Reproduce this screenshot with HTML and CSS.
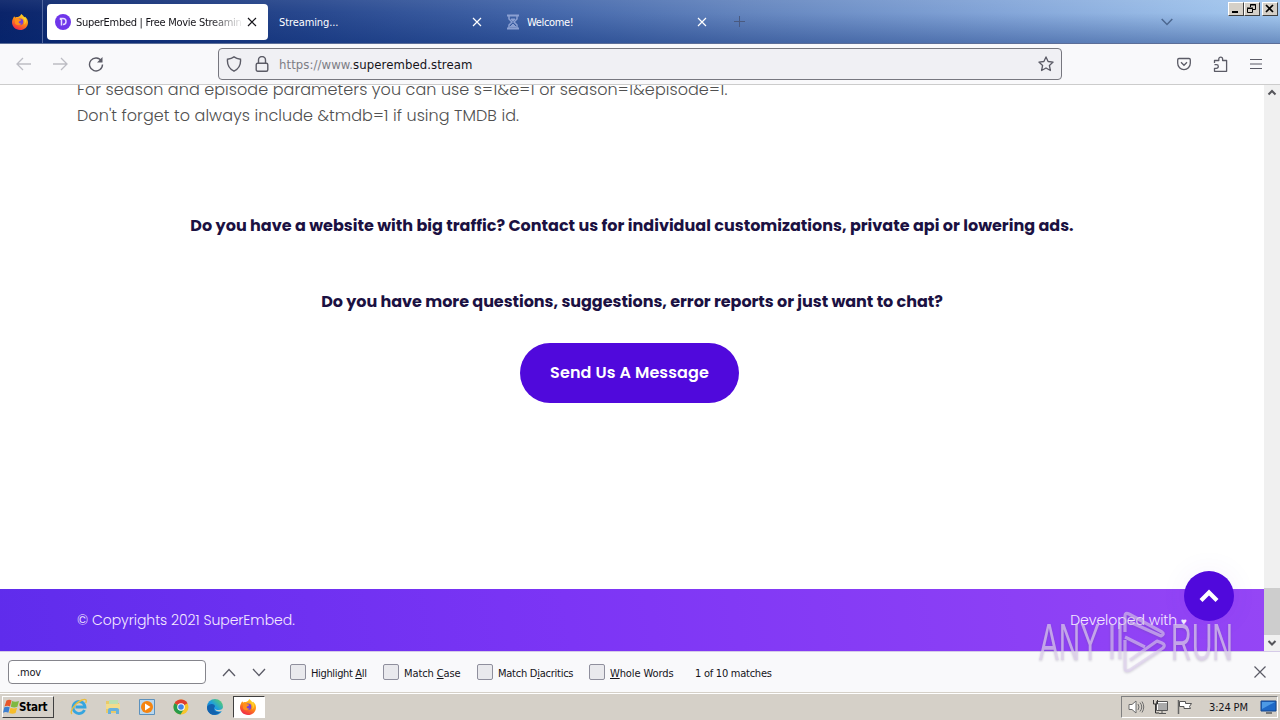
FILE: index.html
```html
<!DOCTYPE html>
<html lang="en">
<head>
    <meta charset="UTF-8">
    <meta name="viewport" content="width=device-width, initial-scale=1.0">
    <title>SuperEmbed | Free Movie Streaming</title>
    <link rel="stylesheet" href="styles.css">
</head>
<body>
    <!-- Shared icons -->
    <svg class="defs" width="0" height="0">
        <defs>
            <linearGradient id="fire" x1="0.8" y1="0" x2="0.3" y2="1">
                <stop offset="0" stop-color="#ffe226"/>
                <stop offset="0.5" stop-color="#ff8a16"/>
                <stop offset="1" stop-color="#f0234b"/>
            </linearGradient>
            <linearGradient id="sea" x1="0" y1="1" x2="1" y2="0">
                <stop offset="0" stop-color="#0c59a4"/>
                <stop offset="0.5" stop-color="#1b9de2"/>
                <stop offset="1" stop-color="#66d955"/>
            </linearGradient>
            <symbol id="firefox" viewBox="0 0 16 16">
                <path d="M2.2 2.2c.3.7.7 1 1.2 1.3C4.400 2.900 5.200 2.900 6 3.100 7.300 2.500 8.800 1.500 9.200 0c1.300.8 2.400 1.900 3 3.400.5-.2.700-.6.700-1C15 4.200 16 6.200 16 8.400 16 12.700 12.500 16 8 16S0 12.700 0 8.300C0 6 1 4.500 2.200 2.200z" fill="url(#fire)"/>
                <circle cx="8" cy="7.800" r="3.300" fill="#7542d8"/>
                <path d="M3 5c1.500-1 3-.9 4.400.3 1 .1 1.800.2 1.800.7-.4 1-1.500 1.100-2.300 1.500-.7 1.500.8 2.400 2.600 1.700-1 2.500-5 2.800-6.500 0z" fill="#ff8f1c"/>
                <path d="M10 3c2.500 1.500 3.500 4.500 2 7.500 2.400-1.400 2.600-4.600 1-7z" fill="#ffd52e"/>
            </symbol>
            <symbol id="cross" viewBox="0 0 10 10">
                <path d="M1 1l8 8M9 1L1 9" fill="none" stroke="currentColor" stroke-width="1.200"/>
            </symbol>
        </defs>
    </svg>

    <!-- Tab strip -->
    <header class="tabstrip">
        <div class="home-tab"><svg width="16" height="16"><use href="#firefox"/></svg></div>
        <div class="tab active">
            <svg width="16" height="16" viewBox="0 0 16 16">
                <circle cx="8" cy="8" r="8" fill="#6e35ea"/>
                <path d="M5.500 6v-1.500h2.500a3 3 0 0 1 0 6M6.500 5v6.500" fill="none" stroke="#e6dcff" stroke-width="1.500"/>
            </svg>
            <span class="title fade">SuperEmbed | Free Movie Streamin</span>
            <svg class="close" width="10" height="10"><use href="#cross"/></svg>
        </div>
        <div class="tab second">
            <span class="title">Streaming...</span>
            <svg class="close" width="10" height="10"><use href="#cross"/></svg>
        </div>
        <div class="tab third">
            <svg width="14" height="16" viewBox="0 0 14 16" fill="none" stroke="#8ba0d2">
                <path d="M1 1.500h12M1 14.500h12" stroke-width="2"/>
                <path d="M3 2v3l3 3-3 3v3M11 2v3L8 8l3 3v3" stroke-width="1.500"/>
                <path d="M5 5h4L7 7zM4 13l3-3 3 3z" fill="#8ba0d2"/>
            </svg>
            <span class="title">Welcome!</span>
            <svg class="close" width="10" height="10"><use href="#cross"/></svg>
        </div>
        <svg class="new-tab" width="11" height="11" viewBox="0 0 11 11"><path d="M5.500 0v11M0 5.500h11" stroke="#4a5a80"/></svg>
        <svg class="all-tabs" width="12" height="8" viewBox="0 0 12 8"><path d="M.7 1L6 6.500 11.300 1" fill="none" stroke="#4d6890" stroke-width="1.500"/></svg>
        <div class="window-buttons">
            <span class="wbtn"><svg width="14" height="12"><path d="M3 9h6" stroke="#000" stroke-width="2"/></svg></span>
            <span class="wbtn restore"><svg width="14" height="12" fill="none" stroke="#000"><path d="M5.500 4V1.500h5v5H8M5 2h6M2.500 5.500h5v4h-5zM2 5h6"/></svg></span>
            <span class="wbtn"><svg width="14" height="12"><path d="M3 2l7 7M10 2L3 9" stroke="#000" stroke-width="1.700"/></svg></span>
        </div>
    </header>

    <!-- Navigation toolbar -->
    <nav class="toolbar">
        <svg class="back" width="16" height="14" viewBox="0 0 16 14" fill="none" stroke="#bdbdc4" stroke-width="1.300"><path d="M15 7H1.500M7 1L1 7l6 6"/></svg>
        <svg class="forward" width="16" height="14" viewBox="0 0 16 14" fill="none" stroke="#bdbdc4" stroke-width="1.300"><path d="M1 7h13.500M9 1l6 6-6 6"/></svg>
        <svg class="reload" width="16" height="16" viewBox="0 0 16 16" fill="none" stroke="#5b5b66" stroke-width="1.400"><path d="M13.500 5A6.500 6.500 0 1 0 14.500 8.500"/><path d="M14.500 1v5.500H9z" fill="#5b5b66" stroke="none"/></svg>
        <div class="urlbar">
            <svg width="16" height="16" viewBox="0 0 16 16" fill="none" stroke="#5b5b66" stroke-width="1.400"><path d="M8 .9c2 1.500 4 2 6.500 2.300C15 8.500 12.500 13 8 15.200 3.500 13 1 8.500 1.500 3.200 4 2.900 6 2.400 8 .9z"/></svg>
            <svg class="lock" width="14" height="16" viewBox="0 0 14 16" fill="none" stroke="#5b5b66" stroke-width="1.400"><rect x="1.200" y="7.200" width="11.600" height="8" rx="1.500"/><path d="M3.500 7V4a3.500 3.500 0 0 1 7 0v3"/></svg>
            <span class="url">https://www.<b>superembed.stream</b></span>
            <svg class="star" width="16" height="16" viewBox="0 0 16 16" fill="none" stroke="#5b5b66" stroke-width="1.300" stroke-linejoin="round"><path d="M8 .9l2.100 4.600 5 .6-3.700 3.400 1 5L8 12l-4.400 2.500 1-5L.9 6.100l5-.6z"/></svg>
        </div>
        <svg class="pocket" width="14" height="14" viewBox="0 0 14 14" fill="none" stroke="#5b5b66" stroke-width="1.300"><path d="M2 1.500h10q1.300 0 1.300 1.300v3.500a6.300 6.300 0 0 1-12.600 0V2.800Q.7 1.500 2 1.500z"/><path d="M4 5.300l3 3 3-3"/></svg>
        <svg class="puzzle" width="15" height="16" viewBox="0 0 15 16" fill="none" stroke="#5b5b66" stroke-width="1.300" stroke-linejoin="round"><path d="M1.500 7V4.500h4.300V3a1.900 1.900 0 0 1 3.800 0v1.500h4v10.800H1.500v-3h2a1.800 1.800 0 0 0 0-3.600h-2"/></svg>
        <svg class="menu" width="12" height="12" viewBox="0 0 12 12"><path d="M0 1.500h12M0 6h12M0 10.500h12" stroke="#5b5b66" stroke-width="1.200"/></svg>
    </nav>

    <!-- Page -->
    <div class="viewport">
        <main class="page">
            <div class="docs">
                <p class="line params">For season and episode parameters you can use s=1&amp;e=1 or season=1&amp;episode=1.</p>
                <p class="line tmdb">Don't forget to always include &amp;tmdb=1 if using TMDB id.</p>
            </div>
            <section class="contact">
                <h4 class="traffic">Do you have a website with big traffic? Contact us for individual customizations, private api or lowering ads.</h4>
                <h4 class="questions">Do you have more questions, suggestions, error reports or just want to chat?</h4>
                <a class="message-btn"><span>Send Us A Message</span></a>
            </section>
            <footer class="footer">
                <span class="copy">© Copyrights 2021 SuperEmbed.</span>
                <span class="dev">Developed with <span class="heart">♥</span></span>
            </footer>
            <a class="to-top"><svg width="20" height="14" viewBox="0 0 20 14"><path d="M2 11.500l8-8 8 8" fill="none" stroke="#fff" stroke-width="4.200"/></svg></a>
        </main>
        <div class="scrollbar">
            <svg width="16" height="16"><path d="M4.500 9.500L8 6l3.500 3.500" fill="none" stroke="#55555a" stroke-width="2"/></svg>
            <span class="thumb"></span>
            <svg width="16" height="16"><path d="M4.500 6L8 9.500 11.500 6" fill="none" stroke="#55555a" stroke-width="2"/></svg>
        </div>
    </div>

    <!-- Find bar -->
    <div class="findbar">
        <div class="find-input">.mov</div>
        <svg class="prev" width="14" height="9"><path d="M1 8l6-6.500L13 8" fill="none" stroke="#5b5b66" stroke-width="1.300"/></svg>
        <svg class="next" width="14" height="9"><path d="M1 1l6 6.500L13 1" fill="none" stroke="#5b5b66" stroke-width="1.300"/></svg>
        <label class="check all"><i></i><span>Highlight <u>A</u>ll</span></label>
        <label class="check case"><i></i><span>Match <u>C</u>ase</span></label>
        <label class="check dia"><i></i><span>Match D<u>i</u>acritics</span></label>
        <label class="check words"><i></i><span><u>W</u>hole Words</span></label>
        <span class="matches">1 of 10 matches</span>
        <svg class="close-find" width="14" height="14" viewBox="0 0 14 14"><path d="M1.500 1.500l11 11M12.500 1.500l-11 11" stroke="#5b5b66" stroke-width="1.200"/></svg>
    </div>

    <!-- Taskbar -->
    <div class="taskbar">
        <div class="start">
            <svg width="16" height="16" viewBox="0 0 16 16">
                <path d="M3.500 1.500q3-1.500 5 0L7 7.500Q4.500 6 1.500 7.500z" fill="#e8562a"/>
                <path d="M9 2q3 1.300 7 0l-1.600 5.800q-3 1.300-6.600 0z" fill="#7fb942"/>
                <path d="M1.300 8.300q3-1.300 5.400 0l-1.300 5.400q-2.500-1.500-5.400 0z" fill="#3c7fd0"/>
                <path d="M7.500 8.800q3 1.300 6.600 0L12.600 14q-3 1.300-6.500 0z" fill="#f6bd2b"/>
            </svg>
            <span>Start</span>
        </div>
        <div class="launch">
            <!-- Internet Explorer -->
            <svg width="18" height="18" viewBox="0 0 18 18" fill="none">
                <path d="M14.500 12A6 6 0 1 1 15 9H5.500" stroke="#35a5df" stroke-width="2.800"/>
                <path d="M2 16C-1 14 5 5 12 2c4-1.700 5 .2 3.700 3" stroke="#e9bd3f" stroke-width="1.400"/>
            </svg>
            <!-- Explorer -->
            <svg width="18" height="18" viewBox="0 0 18 18">
                <path d="M2 3h5l1 2h7v10H2z" fill="#e9ca69"/>
                <path d="M5 2h9v5H5z" fill="#bde0b0"/>
                <path d="M2 6h14v5H2z" fill="#f3dc8c"/>
                <path d="M4 16v-4q0-2 2-2h7q2 0 2 2v4h-3v-3H7v3z" fill="#68b1dd"/>
            </svg>
            <!-- Media player -->
            <svg width="18" height="18" viewBox="0 0 18 18">
                <path d="M1.500 1.500h15v15h-15z" fill="#b9d7ee" stroke="#5c91bd"/>
                <circle cx="9" cy="9" r="6" fill="#f58410"/>
                <path d="M7 5.500L12.500 9 7 12.500z" fill="#fff"/>
            </svg>
            <!-- Chrome -->
            <svg width="18" height="18" viewBox="0 0 18 18">
                <circle cx="9" cy="9" r="7.500" fill="#f7c52c"/>
                <path d="M9 9L2.500 5.200a7.500 7.500 0 0 1 13 0z" fill="#df3e30"/>
                <path d="M9 9L2.500 5.200A7.500 7.500 0 0 0 8.500 16.500L12 11z" fill="#279b4a"/>
                <circle cx="9" cy="9" r="3.800" fill="#fff"/><circle cx="9" cy="9" r="2.800" fill="#4285e8"/>
            </svg>
            <!-- Edge -->
            <svg width="18" height="18" viewBox="0 0 18 18">
                <circle cx="9" cy="9" r="8" fill="url(#sea)"/>
                <path d="M1 9c2-4 8-4 8-.5-2 2-1 6 4 5.500l2-1c-4 6-14 5-14-4z" fill="#1262ae"/>
                <path d="M9 8.500c-1 2 1 4 4 3.500 2 0 4-1 4-2.500v3l-2 .7c-5 1-7-2-6-4.700z" fill="#d5d0c8"/>
            </svg>
        </div>
        <div class="running"><svg width="16" height="16"><use href="#firefox"/></svg></div>
        <div class="tray">
            <svg width="17" height="16" viewBox="0 0 17 16" fill="none" stroke="#6c6c6c"><path d="M1 5.500h3L8 2v12l-4-3.500H1z" fill="#fff"/><path d="M10 5q2 3 0 6M12 3.500q3.500 4.500 0 9M14 2.500q3.500 5.500 0 11"/></svg>
            <svg width="17" height="16" viewBox="0 0 17 16" fill="none" stroke="#555"><path d="M5.500 3.500h10v8h-10z" fill="#aaa" stroke="#fff"/><path d="M4.500 2.500h11v9h-11zM7 14.500h7M10 12v2"/><path d="M1.500 1v4h4V1M3.500 5v9H7" stroke="#333"/></svg>
            <svg width="17" height="16" viewBox="0 0 17 16"><path d="M2.500 1v14" stroke="#666" stroke-width="1.500"/><path d="M3.500 2.500h6v2h6l-2 3 1 2H8v-2H3.500z" fill="#fff" stroke="#555"/></svg>
            <span class="clock">3:24 PM</span>
            <svg width="17" height="14" viewBox="0 0 17 14"><path d="M1 1h15v10H1z" fill="#1e69c7" stroke="#17478b"/><path d="M2 2h13L2 9z" fill="#4d9ae5"/><path d="M6 13h6" stroke="#777" stroke-width="2"/></svg>
        </div>
    </div>

    <!-- Watermark -->
    <svg class="watermark" width="210" height="72" viewBox="0 0 210 72">
        <text x="7" y="53" textLength="61" lengthAdjust="spacingAndGlyphs">ANY</text>
        <text x="139" y="53" textLength="62" lengthAdjust="spacingAndGlyphs">RUN</text>
        <path d="M80 17v35M88 17v35M93 25V9q0-4 4-2l33 18q3 2-1 4L98 15M93 33v28q0 4 5 2l33-22q3-3-1-5l-5-2-27 19M93 30l20 10"/>
    </svg>
</body>
</html>
```
FILE: styles.css
```css
* {
    box-sizing: border-box;
}

body {
    margin: 0;
    width: 1280px;
    height: 720px;
    overflow: hidden;
    display: flex;
    flex-direction: column;
    position: relative;
    background: #fff;
    font-family: "DejaVu Sans Condensed", "DejaVu Sans", sans-serif;
    font-stretch: condensed;
    font-size: 11px;
    color: #15141a;
}

svg {
    display: block;
    flex: none;
}

.defs {
    position: absolute;
}

/* Tab strip */
.tabstrip {
    height: 44px;
    flex: none;
    display: flex;
    align-items: center;
    position: relative;
    background: linear-gradient(to bottom, rgba(255, 255, 255, 0.06), rgba(0, 15, 80, 0) 30%, rgba(0, 35, 110, 0.36)),
        linear-gradient(to right, #0a246a 0, #29498f 25%, #4568ab 43%, #6485be 58%, #83a5d8 78%, #a6caf0 100%);
    border-bottom: 1px solid #5c6e98;
    color: #fff;
}

.home-tab {
    width: 43px;
    height: 43px;
    padding: 14px 0 0 12px;
    border-right: 1px solid #5268a0;
}

.tab {
    display: flex;
    align-items: center;
    height: 36px;
    border-radius: 4px;
}

.tab .title {
    margin-top: 2px;
    white-space: nowrap;
}

.tab .close {
    margin-left: auto;
}

.tab.active {
    width: 221px;
    margin-left: 4px;
    padding: 0 11px 0 8px;
    background: #fff;
    color: #15141a;
}

.tab.active .title {
    width: 168px;
    margin-left: 5px;
    letter-spacing: -0.28px;
}

.fade {
    -webkit-mask-image: linear-gradient(to right, #000 80%, transparent);
    mask-image: linear-gradient(to right, #000 80%, transparent);
}

.tab.second {
    width: 214px;
    padding: 0 0 0 11px;
}

.tab.second .title {
    letter-spacing: -0.1px;
}

.tab.third {
    width: 225px;
    padding-left: 24px;
}

.tab.third .title {
    margin-left: 7px;
    letter-spacing: -0.35px;
}

.new-tab {
    margin-left: 27px;
}

.all-tabs {
    margin-left: 416px;
}

.window-buttons {
    position: absolute;
    right: 2px;
    top: 2px;
    display: flex;
}

.wbtn {
    width: 16px;
    height: 14px;
    background: #d5d0c8;
    border: 1px solid;
    border-color: #fff #404040 #404040 #fff;
}

.wbtn.restore {
    margin-right: 2px;
}

/* Toolbar */
.toolbar {
    height: 41px;
    flex: none;
    display: flex;
    align-items: center;
    padding-left: 16px;
    background: #f9f9fb;
    border-bottom: 1px solid #ccc;
}

.forward {
    margin-left: 20px;
}

.reload {
    margin-left: 20px;
}

.urlbar {
    width: 844px;
    height: 32px;
    margin-left: 114px;
    padding: 0 7px;
    display: flex;
    align-items: center;
    gap: 12px;
    background: #f0f0f4;
    border: 1px solid #77777f;
    border-radius: 4px;
}

.lock {
    margin-left: 1px;
}

.url {
    margin-left: -2px;
    font-size: 13px;
    color: #7d7d85;
    letter-spacing: 0.08px;
}

.url b {
    font-weight: normal;
    color: #15141a;
}

.star {
    margin-left: auto;
}

.pocket {
    margin-left: 115px;
}

.puzzle {
    margin-left: 22px;
}

.menu {
    margin-left: 22px;
}

/* Page */
.viewport {
    height: 566px;
    flex: none;
    display: flex;
}

.page {
    width: 1264px;
    display: flex;
    flex-direction: column;
    position: relative;
    overflow: hidden;
    font-family: Poppins, Inter, sans-serif;
    font-stretch: normal;
}

.docs {
    height: 115px;
    margin-top: -8px;
    padding-left: 77px;
}

.line {
    margin: 0;
    font-size: 16px;
    font-weight: 300;
    line-height: 26px;
    letter-spacing: 0.06px;
    color: #505050;
    white-space: nowrap;
}

.contact {
    flex: 1;
    display: flex;
    flex-direction: column;
    align-items: center;
}

.contact h4 {
    margin: 22px 0 0;
    height: 24px;
    font-size: 16px;
    font-weight: 700;
    line-height: 24px;
    color: #1b1142;
    white-space: nowrap;
}

.contact h4.questions {
    margin-top: 52px;
    letter-spacing: -0.04px;
}

.message-btn {
    width: 219px;
    height: 60px;
    margin: 29px 5px 0 0;
    padding-bottom: 2px;
    display: flex;
    align-items: center;
    justify-content: center;
    border-radius: 30px;
    background: #5009dc;
    color: #fff;
    font-size: 16px;
    font-weight: 600;
    letter-spacing: 0.1px;
    white-space: nowrap;
}

.footer {
    height: 62px;
    display: flex;
    justify-content: space-between;
    align-items: center;
    padding: 0 77px;
    background: linear-gradient(80deg, #5f2cec, #7c35f5 45%, #9546f5);
    color: #f5eaff;
    font-size: 14px;
    font-weight: 300;
}

.copy {
    letter-spacing: -0.03px;
}

.heart {
    font-family: "DejaVu Sans", sans-serif;
    font-size: 10px;
}

.to-top {
    position: absolute;
    right: 30px;
    bottom: 30px;
    width: 50px;
    height: 50px;
    display: flex;
    align-items: center;
    justify-content: center;
    border-radius: 50%;
    background: #5009dc;
    box-shadow: 0 0 30px rgba(80, 9, 220, 0.06);
}

.scrollbar {
    width: 16px;
    display: flex;
    flex-direction: column;
    background: #f0f0f0;
}

.thumb {
    height: 47px;
    margin-top: auto;
    background: #cdcdcd;
}

/* Find bar */
.findbar {
    height: 42px;
    flex: none;
    display: flex;
    align-items: center;
    padding-left: 8px;
    background: #f9f9fb;
    border-top: 1px solid #d5cbe8;
    border-bottom: 1px solid #d5d0c8;
}

.find-input {
    width: 198px;
    height: 24px;
    padding-left: 8px;
    line-height: 24px;
    letter-spacing: -0.2px;
    background: #fff;
    border: 1px solid #85858c;
    border-radius: 4px;
}

.prev {
    margin-left: 16px;
}

.next {
    margin-left: 16px;
}

.check {
    display: flex;
    align-items: center;
    gap: 5px;
    letter-spacing: -0.1px;
    white-space: nowrap;
}

.check i {
    width: 16px;
    height: 16px;
    background: #e9e9ed;
    border: 1px solid #8f8f9d;
    border-radius: 2px;
}

.check span,
.matches {
    padding-top: 2px;
}

.matches {
    letter-spacing: -0.25px;
}

.all {
    width: 93px;
    margin-left: 24px;
    letter-spacing: -0.35px;
}

.case {
    width: 94px;
}

.dia {
    width: 112px;
    letter-spacing: -0.25px;
}

.words {
    width: 106px;
}

.close-find {
    margin-left: auto;
    margin-right: 13px;
}

/* Taskbar */
.taskbar {
    flex: 1;
    display: flex;
    align-items: center;
    padding: 0 2px;
    background: #d5d0c8;
    border-top: 1px solid #fff;
}

.start {
    width: 52px;
    height: 22px;
    display: flex;
    align-items: center;
    border: 1px solid;
    border-color: #fff #404040 #404040 #fff;
    color: #000;
    font-size: 11.5px;
    font-weight: bold;
    letter-spacing: -0.25px;
}

.launch {
    display: flex;
    gap: 16px;
    margin-left: 16px;
}

.running {
    width: 32px;
    height: 22px;
    margin-left: 9px;
    padding: 3px 6px;
    background: #fff;
    border: 1px solid;
    border-color: #404040 #fff #fff #404040;
}

.running svg {
    margin-top: -1px;
}

.tray {
    height: 22px;
    width: 157px;
    margin-left: auto;
    padding-left: 6px;
    display: flex;
    align-items: center;
    gap: 7px;
    border: 1px solid;
    border-color: #808080 #fff #fff #808080;
}

.clock {
    width: 44px;
    margin-left: 9px;
    letter-spacing: -0.15px;
    white-space: nowrap;
}

/* Watermark */
.watermark {
    position: absolute;
    left: 1032px;
    top: 607px;
    fill: none;
    stroke: rgba(222, 207, 238, 0.6);
    stroke-width: 3.2;
    stroke-linejoin: round;
    filter: drop-shadow(0 1px 1px rgba(90, 80, 110, 0.35));
}

.watermark text {
    font-family: "Liberation Sans Narrow", "Liberation Sans", sans-serif;
    font-size: 51px;
    fill: #decfee;
    fill-opacity: 0.7;
    stroke: none;
}
```
